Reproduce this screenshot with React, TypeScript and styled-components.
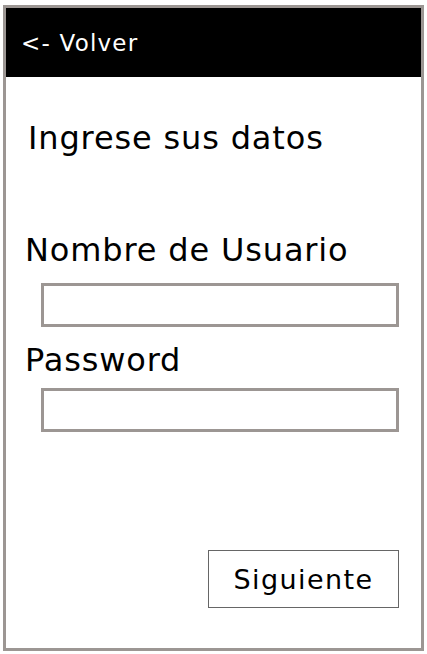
import React from "react";
import styled, { createGlobalStyle } from "styled-components";

const Global = createGlobalStyle`
  html, body { margin: 0; padding: 0; background: #ffffff; }
  body { font-family: "DejaVu Sans", Verdana, sans-serif; }
`;

const Frame = styled.div`
  box-sizing: border-box;
  margin: 5px 0 0 3px;
  width: 421px;
  height: 646px;
  border: 3px solid #9c9693;
  display: flex;
  flex-direction: column;
  background: #ffffff;
`;

const Header = styled.div`
  height: 69px;
  background: #000000;
  display: flex;
  align-items: center;
  padding-left: 15px;
  color: #ffffff;
  font-size: 23px;
  letter-spacing: 1.2px;
`;

const Body = styled.div`
  flex: 1;
  display: flex;
  flex-direction: column;
  padding: 0 22px 0 19px;
`;

const Title = styled.h1`
  margin: 43px 0 0 3px;
  font-weight: normal;
  font-size: 32px;
  letter-spacing: 0.85px;
  line-height: 36px;
  color: #000;
`;

const Label = styled.div<{ $top: number }>`
  margin-top: ${(p) => p.$top}px;
  font-size: 32px;
  letter-spacing: 0.85px;
  line-height: 36px;
  color: #000;
`;

const Field = styled.div<{ $top: number }>`
  box-sizing: border-box;
  margin: ${(p) => p.$top}px 0 0 16px;
  width: 358px;
  height: 44px;
  border: 3px solid #9c9693;
`;

const Footer = styled.div`
  display: flex;
  justify-content: flex-end;
  margin-top: 118px;
`;

const Button = styled.div`
  box-sizing: border-box;
  width: 191px;
  height: 58px;
  border: 1px solid #666666;
  display: flex;
  align-items: center;
  justify-content: center;
  font-size: 27px;
  letter-spacing: 1.4px;
  color: #000;
`;

export default function App() {
  return (
    <>
      <Global />
      <Frame>
        <Header>&lt;- Volver</Header>
        <Body>
          <Title>Ingrese sus datos</Title>
          <Label $top={76}>Nombre de Usuario</Label>
          <Field $top={15} />
          <Label $top={15}>Password</Label>
          <Field $top={10} />
          <Footer>
            <Button>Siguiente</Button>
          </Footer>
        </Body>
      </Frame>
    </>
  );
}
